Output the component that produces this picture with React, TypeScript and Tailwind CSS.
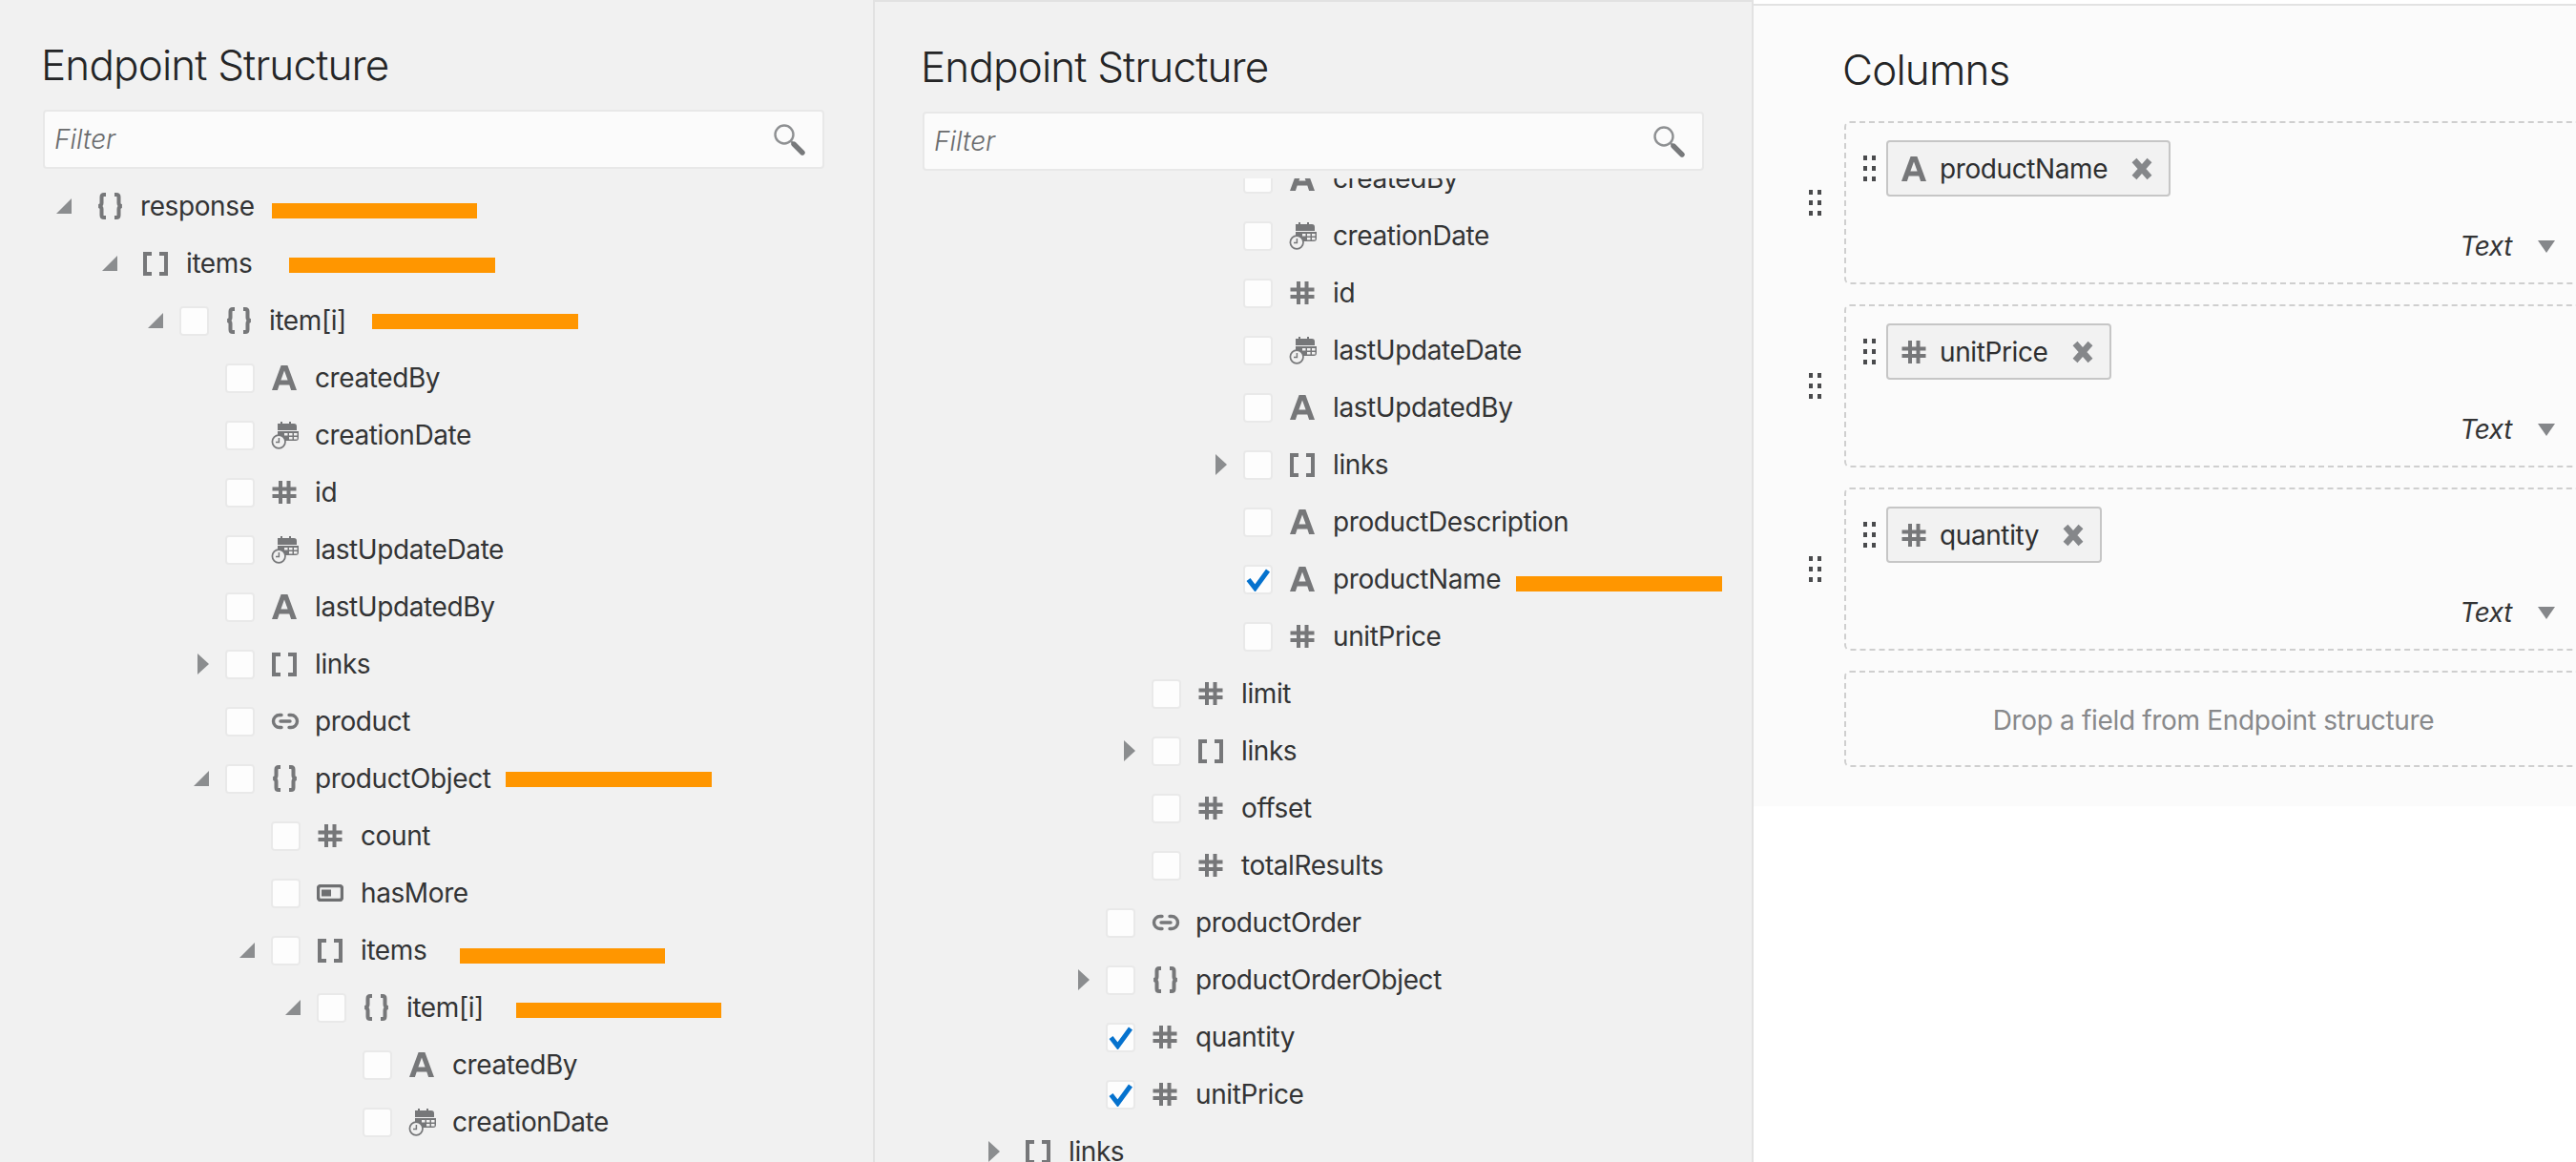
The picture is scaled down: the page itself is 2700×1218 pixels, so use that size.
import React from "react";

const SANS = "font-['Inter','Noto_Sans',sans-serif]";

function TextIcon() {
  return (
    <svg width="28" height="28" viewBox="0 0 28 28" className="text-[#767779]">
      <path fill="currentColor" d="M10.6 1h6.8L27 27h-5.9l-1.8-5.4H8.7L6.9 27H1zM10.4 16.6h7.2L14 6.4z" fillRule="evenodd" />
    </svg>
  );
}

function NumberIcon() {
  return (
    <svg width="28" height="28" viewBox="0 0 28 28" className="text-[#767779]">
      <path
        fill="currentColor"
        d="M8 2h4v24H8zM16.5 2h4v24h-4zM1.5 8.5h25v4h-25zM1.5 16h25v4h-25z"
      />
    </svg>
  );
}

function ObjectIcon() {
  return (
    <svg width="30" height="28" viewBox="0 0 30 28" fill="none" stroke="#767779" strokeWidth="4" className="shrink-0">
      <path d="M10 2H8C6.5 2 5.5 3 5.5 4.5V11c0 1.5-1 2.6-3 3 2 .4 3 1.5 3 3v6.500C5.500 25 6.500 26 8 26h2" />
      <path d="M19 2h2c1.500 0 2.500 1 2.500 2.500V11c0 1.500 1 2.600 3 3-2 .4-3 1.500-3 3v6.500c0 1.500-1 2.500-2.500 2.500h-2" />
    </svg>
  );
}

function ArrayIcon() {
  return (
    <svg width="28" height="28" viewBox="0 0 28 28" fill="none" stroke="#767779" strokeWidth="4">
      <path d="M10 4H3v21h7M18 4h7v21h-7" />
    </svg>
  );
}

function LinkIcon() {
  return (
    <svg width="30" height="20" viewBox="0 0 30 20" fill="none" stroke="#767779" strokeWidth="3.4" strokeLinecap="round">
      <path d="M11 3.500H9a6.500 6.500 0 0 0 0 13h2M19 3.500h2a6.500 6.500 0 0 1 0 13h-2M10 10h10" />
    </svg>
  );
}

function BooleanIcon() {
  return (
    <svg width="28" height="18" viewBox="0 0 28 18">
      <rect x="1.500" y="1.500" width="25" height="15" rx="2.500" fill="none" stroke="#6e6f71" strokeWidth="3.400" />
      <rect x="5" y="5.500" width="10" height="7" fill="#6e6f71" />
    </svg>
  );
}

function DateIcon() {
  return (
    <svg width="30" height="30" viewBox="0 0 30 30">
      <path fill="#767779" d="M7 3h3V1h2v2h7V1h2v2h3c2 0 3 1 3 3v4H7z" />
      <path
        fill="#767779"
        fillRule="evenodd"
        d="M7 11h22v7c0 2-1 3-3 3H14.500A10 10 0 0 0 7 15.500zM14 13v2.500h3.500V13zm5 0v2.500h3.500V13zm5 0v2.500h3.500V13zm-5 4v2.500h3.500V17zm5 0v2.500h3.500V17z"
      />
      <circle cx="8.200" cy="22" r="6.800" fill="#f1f1f1" stroke="#767779" strokeWidth="1.700" />
      <path d="M8.400 18v4.400H5" fill="none" stroke="#767779" strokeWidth="1.500" />
    </svg>
  );
}

const ICONS = {
  text: TextIcon,
  number: NumberIcon,
  object: ObjectIcon,
  array: ArrayIcon,
  link: LinkIcon,
  boolean: BooleanIcon,
  date: DateIcon,
};

type Kind = keyof typeof ICONS;

interface RowData {
  label: string;
  icon: Kind;
  indent: number;
  arrow?: "open" | "closed";
  noCheck?: boolean;
  checked?: boolean;
  // left, width, top of the orange marker
  bar?: [number, number, number];
}

function OpenArrow() {
  return (
    <svg width="16" height="16" viewBox="0 0 16 16" className="block">
      <path d="M16 0v16H0z" fill="#8b8d8f" />
    </svg>
  );
}

function ClosedArrow() {
  return (
    <svg width="12" height="22" viewBox="0 0 12 22" className="block ml-[4px]">
      <path d="M0 0l12 11L0 22z" fill="#8b8d8f" />
    </svg>
  );
}

function Checkbox({ checked }: { checked?: boolean }) {
  return (
    <span className="relative block w-[31px] h-[31px] bg-[#fdfdfd] border-2 border-[#e9e9e9] rounded-[4px]">
      {checked && (
        <svg width="26" height="24" viewBox="0 0 26 24" className="absolute left-[1px] top-[2px]">
          <path d="M2.500 11.500l7 9L23 2" fill="none" stroke="#0572ce" strokeWidth="5" />
        </svg>
      )}
    </span>
  );
}

function TreeRow({ row }: { row: RowData }) {
  const Icon = ICONS[row.icon];
  return (
    <div className="relative flex items-center h-[60px] shrink-0" style={{ paddingLeft: row.indent }}>
      <span className={row.noCheck ? "w-[42px] shrink-0" : "w-[33px] shrink-0"}>
        {row.arrow === "open" && <OpenArrow />}
        {row.arrow === "closed" && <ClosedArrow />}
      </span>
      {!row.noCheck && (
        <span className="w-[48px] shrink-0">
          <Checkbox checked={row.checked} />
        </span>
      )}
      <span className="w-[46px] shrink-0 flex items-center">
        <Icon />
      </span>
      <span className="text-[28px] leading-[60px] text-[#333435] tracking-[-0.4px] whitespace-nowrap">{row.label}</span>
      {row.bar && (
        <span
          className="absolute h-[16px] bg-[#ff9600]"
          style={{ left: row.bar[0], width: row.bar[1], top: row.bar[2] }}
        />
      )}
    </div>
  );
}

function FilterBox() {
  return (
    <div className="flex items-center justify-between w-[819px] h-[62px] pl-[10px] pr-[18px] bg-[#fbfbfb] border-2 border-[#e8e8e8] rounded-[4px]">
      <span className="text-[28px] italic font-light text-[#6a6b6d]">Filter</span>
      <svg width="34" height="34" viewBox="0 0 34 34" fill="none">
        <circle cx="12" cy="12" r="9.500" stroke="#8e9092" strokeWidth="2.400" />
        <path d="M19 19l3 3" stroke="#8e9092" strokeWidth="2.400" />
        <path d="M22 22l9 9" stroke="#77797b" strokeWidth="5.400" strokeLinecap="round" />
      </svg>
    </div>
  );
}

const LEFT_ROWS: RowData[] = [
  { label: "response", icon: "object", indent: 59, arrow: "open", noCheck: true, bar: [285, 215, 27] },
  { label: "items", icon: "array", indent: 107, arrow: "open", noCheck: true, bar: [303, 216, 24] },
  { label: "item[i]", icon: "object", indent: 155, arrow: "open", bar: [390, 216, 23] },
  { label: "createdBy", icon: "text", indent: 203 },
  { label: "creationDate", icon: "date", indent: 203 },
  { label: "id", icon: "number", indent: 203 },
  { label: "lastUpdateDate", icon: "date", indent: 203 },
  { label: "lastUpdatedBy", icon: "text", indent: 203 },
  { label: "links", icon: "array", indent: 203, arrow: "closed" },
  { label: "product", icon: "link", indent: 203 },
  { label: "productObject", icon: "object", indent: 203, arrow: "open", bar: [530, 216, 23] },
  { label: "count", icon: "number", indent: 251 },
  { label: "hasMore", icon: "boolean", indent: 251 },
  { label: "items", icon: "array", indent: 251, arrow: "open", bar: [482, 215, 28] },
  { label: "item[i]", icon: "object", indent: 299, arrow: "open", bar: [541, 215, 25] },
  { label: "createdBy", icon: "text", indent: 347 },
  { label: "creationDate", icon: "date", indent: 347 },
];

const MIDDLE_ROWS: RowData[] = [
  { label: "createdBy", icon: "text", indent: 353 },
  { label: "creationDate", icon: "date", indent: 353 },
  { label: "id", icon: "number", indent: 353 },
  { label: "lastUpdateDate", icon: "date", indent: 353 },
  { label: "lastUpdatedBy", icon: "text", indent: 353 },
  { label: "links", icon: "array", indent: 353, arrow: "closed" },
  { label: "productDescription", icon: "text", indent: 353 },
  { label: "productName", icon: "text", indent: 353, checked: true, bar: [672, 216, 27] },
  { label: "unitPrice", icon: "number", indent: 353 },
  { label: "limit", icon: "number", indent: 257 },
  { label: "links", icon: "array", indent: 257, arrow: "closed" },
  { label: "offset", icon: "number", indent: 257 },
  { label: "totalResults", icon: "number", indent: 257 },
  { label: "productOrder", icon: "link", indent: 209 },
  { label: "productOrderObject", icon: "object", indent: 209, arrow: "closed" },
  { label: "quantity", icon: "number", indent: 209, checked: true },
  { label: "unitPrice", icon: "number", indent: 209, checked: true },
  { label: "links", icon: "array", indent: 115, arrow: "closed", noCheck: true },
];

function DragDots() {
  return (
    <span className="grid grid-cols-2 gap-x-[5px] gap-y-[6px] w-[13px] shrink-0">
      {[0, 1, 2, 3, 4, 5].map((i) => (
        <span key={i} className="w-[4px] h-[5px] bg-[#4a4b4d]" />
      ))}
    </span>
  );
}

function ColumnBox({ name, icon, width }: { name: string; icon: Kind; width: number }) {
  const Icon = ICONS[icon];
  return (
    <div className="flex items-center">
      <div className="w-[37px] shrink-0">
        <DragDots />
      </div>
      <div className="w-[774px] h-[171px] shrink-0 border-2 border-dashed border-[#cfcfcf] rounded-[6px] pt-[18px] pl-[18px] flex flex-col">
        <div className="flex items-center gap-[11px]">
          <DragDots />
          <div
            className="flex items-center h-[59px] pl-[13px] bg-[#f2f2f2] border-2 border-[#c6c6c6] rounded-[4px]"
            style={{ width }}
          >
            <span className="w-[41px] shrink-0 flex items-center">
              <Icon />
            </span>
            <span className="text-[28px] text-[#2e2f30] tracking-[-0.4px] whitespace-nowrap">{name}</span>
            <svg width="24" height="24" viewBox="0 0 24 24" className="ml-auto mr-[16px] shrink-0">
              <path d="M4 3l16 18M20 3L4 21" stroke="#85878a" strokeWidth="6.500" />
            </svg>
          </div>
        </div>
        <div className="flex items-center justify-end mt-[31px] pr-[27px]">
          <span className="text-[28px] italic text-[#333435] tracking-[-0.4px]">Text</span>
          <svg width="18" height="13" viewBox="0 0 18 13" className="ml-[27px]">
            <path d="M0 0h18L9 13z" fill="#85878a" />
          </svg>
        </div>
      </div>
    </div>
  );
}

const HEADING = "text-[44px] leading-[54px] font-light text-[#242526] tracking-[-0.85px]";

export default function App() {
  return (
    <div className={`${SANS} flex w-[2700px] h-[1218px] overflow-hidden bg-white`}>
      <section className="w-[917px] shrink-0 h-full bg-[#f1f1f1] border-r-2 border-[#e2e2e2] flex flex-col overflow-hidden">
        <div className="pl-[45px] pt-[41px]">
          <h2 className={`${HEADING} -ml-[2px] mb-[20px]`}>Endpoint Structure</h2>
          <FilterBox />
        </div>
        <div className="mt-[9px]">
          {LEFT_ROWS.map((row, i) => (
            <TreeRow key={i} row={row} />
          ))}
        </div>
      </section>

      <section className="w-[921px] shrink-0 h-full bg-[#f1f1f1] border-t-2 border-r-2 border-[#e2e2e2] flex flex-col overflow-hidden">
        <div className="pl-[50px] pt-[41px]">
          <h2 className={`${HEADING} -ml-[2px] mb-[20px]`}>Endpoint Structure</h2>
          <FilterBox />
        </div>
        <div className="mt-[8px] h-[1100px] overflow-hidden">
          <div className="-mt-[30px]">
            {MIDDLE_ROWS.map((row, i) => (
              <TreeRow key={i} row={row} />
            ))}
          </div>
        </div>
      </section>

      <section className="flex-1 min-w-0 h-full pt-[4px] overflow-hidden">
        <div className="h-[841px] bg-[#fbfbfb] border-t-2 border-[#e2e2e2] pl-[58px] overflow-hidden">
          <h2 className={`${HEADING} ml-[35px] mt-[40px] mb-[27px]`}>Columns</h2>
          <div className="flex flex-col gap-[21px]">
            <ColumnBox name="productName" icon="text" width={298} />
            <ColumnBox name="unitPrice" icon="number" width={236} />
            <ColumnBox name="quantity" icon="number" width={226} />
            <div className="ml-[37px] w-[774px] h-[101px] border-2 border-dashed border-[#cfcfcf] rounded-[6px] flex items-center justify-center pt-[2px]">
              <span className="text-[28px] text-[#88898b] tracking-[-0.33px]">Drop a field from Endpoint structure</span>
            </div>
          </div>
        </div>
      </section>
    </div>
  );
}
